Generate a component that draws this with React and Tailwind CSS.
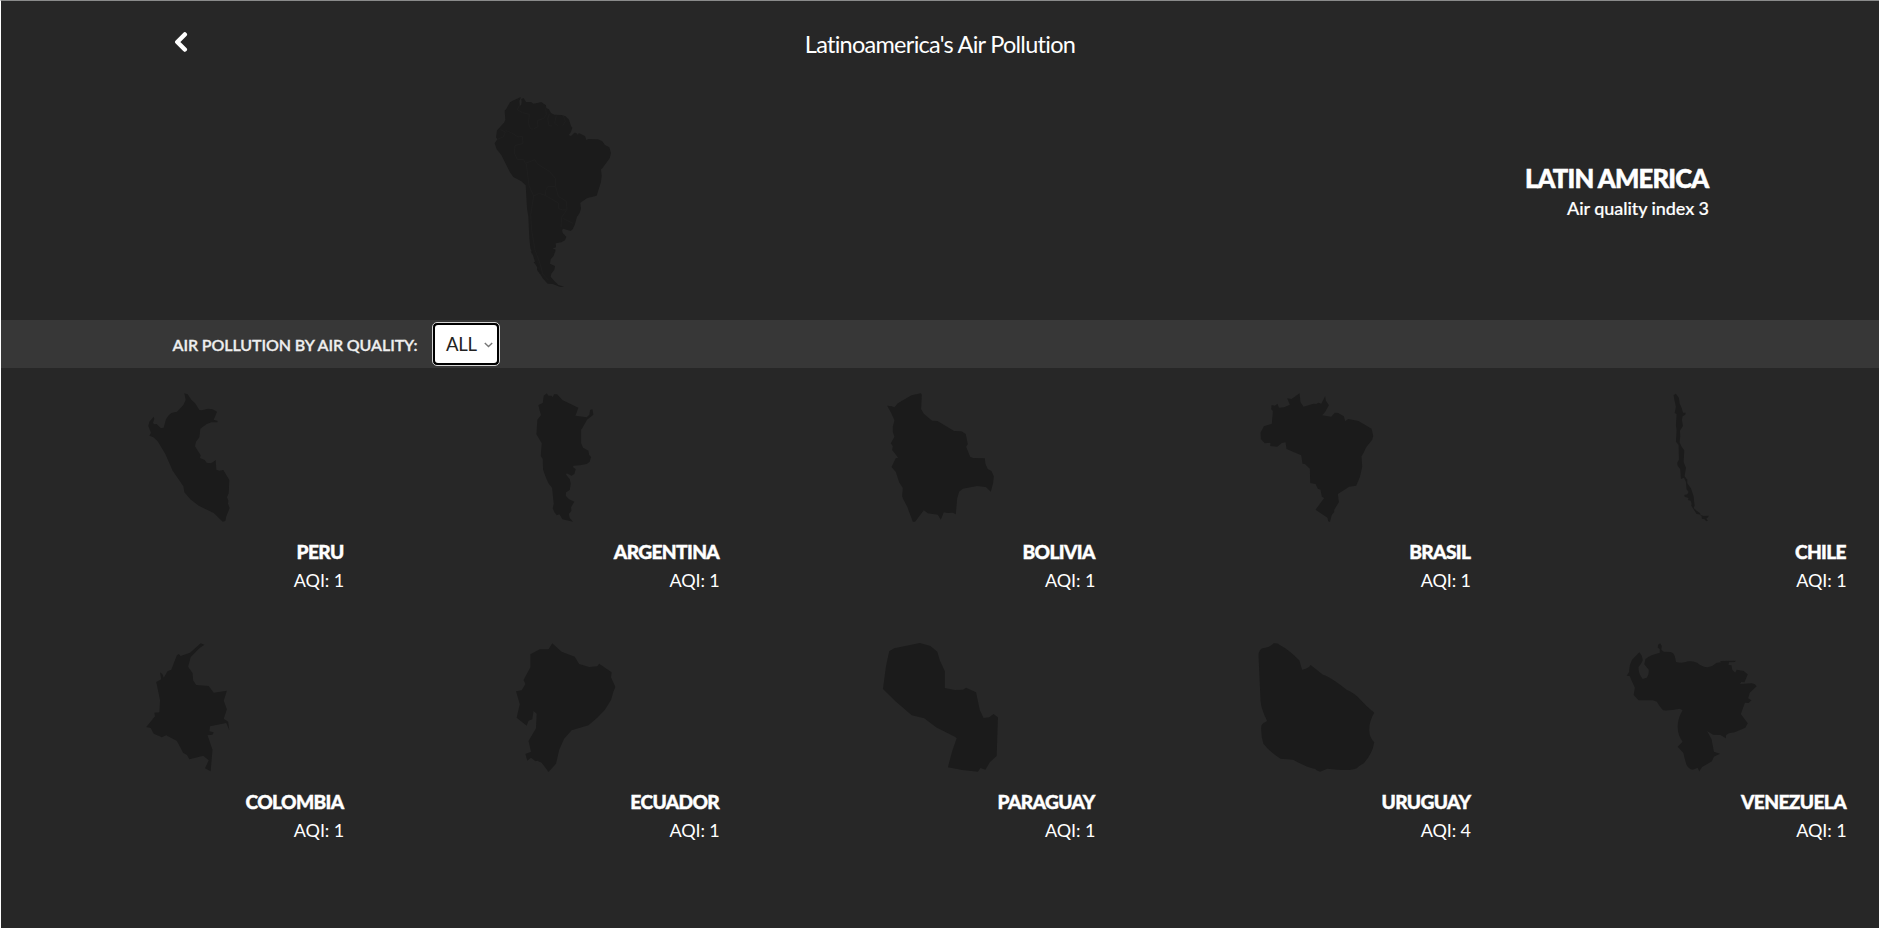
import React from "react";

const countries = [
  { name: "PERU", aqi: 1, place: "translate(129 12) scale(.33333)", d: "M163 40L173 43L184 59L195 69L208 90L216 91L234 86L248 88L261 95L256 108L251 119L263 123L262 127L244 127L229 133L211 146L208 172L198 185L195 199L212 226L210 234L224 240L230 248L242 250L249 246L257 240L259 269L268 272L280 270L298 300L296 340L291 352L295 362L294 371L299 384L289 409L286 423L278 425L251 399L206 377L181 358L163 337L160 319L128 272L106 222L83 184L70 172L58 167L63 158L55 138L58 125L71 110L73 117L69 128L72 133L80 132L93 145L101 143L108 118L116 106L124 99L141 95L160 75L167 60Z" },
  { name: "ARGENTINA", aqi: 1, place: "translate(133.4 12) scale(.33333)", d: "M100 47L109 40L114 47L124 47L127 52L131 43L140 43L157 61L204 83L195 107L229 112L237 104L239 90L246 88L249 104L230 119L216 144L212 149L212 189L218 203L234 212L236 224L242 231L238 245L229 252L209 256L189 257L188 262L196 267L192 282L183 287L169 280L167 284L178 297L181 311L178 330L167 337L166 347L176 358L192 365L182 382L183 393L175 402L178 414L188 425L156 418L147 403L139 406L132 397L127 385L130 372L125 323L115 311L107 294L98 269L97 237L91 228L94 190L78 163L81 119L92 105L87 89L84 75L97 69Z" },
  { name: "BOLIVIA", aqi: 1, place: "translate(117.8 12) scale(.33333)", d: "M52 77L66 79L74 82L84 70L125 46L153 40L156 44L154 87L162 101L187 122L203 123L253 153L275 154L288 162L294 193L289 200L301 230L310 234L345 235L347 252L354 267L365 273L372 289L370 309L363 335L348 321L322 318L279 326L268 335L262 356L258 403L249 398L233 399L222 397L213 419L204 404L174 400L162 391L136 425H129L113 382L100 357L97 349L99 324L88 307L78 276L65 261L78 235L85 233L70 214L67 210L69 199L63 190L74 170L69 155L69 140L74 121L64 99Z" },
  { name: "BRASIL", aqi: 1, place: "translate(112.2 12) scale(.33333)", d: "M178 40L181 67L190 80L220 71L228 72L235 68L243 71L255 49L257 62L266 76L255 95L246 106L273 110L284 98L294 99L311 109L315 124L324 117L355 123L394 146L399 167L396 179L378 202L370 219L364 229L366 261L359 291L348 317L327 320L293 342L296 367L282 389L282 396L275 404L269 426L264 424L262 413L226 389L252 354L245 350L241 329L233 326L226 312L210 309L209 266L194 252L187 251L183 226L139 207L136 187L125 189L111 200L90 198L91 188L74 190L62 177L61 158L71 139L95 131L98 93L93 88L94 75L104 77L112 71L116 83L132 82L149 74L141 55L154 57Z" },
  { name: "CHILE", aqi: 1, place: "translate(116.6 12) scale(.33333)", d: "M162 45L169 41L178 54L180 70L187 86L190 98L198 98L197 104L189 109L187 120L190 138L181 152L182 168L180 187L186 200L194 211L192 246L199 263L195 289L203 299L203 310L214 325L222 349L225 377L222 384L232 393L241 399L243 405L253 408L267 407L266 411L260 416L265 422L260 424L255 418L247 416L246 409L239 403L231 402L215 377L216 371L213 362L205 360L207 354L195 350L194 345L203 343L207 336L201 328L199 306L193 293L184 297L182 268L174 257L173 248L178 239L177 195L169 185L171 151L169 135L171 102L165 99L169 81L164 58Z" },
  { name: "COLOMBIA", aqi: 1, place: "translate(129 12) scale(.625 .33333)", d: "M113 40L119 44L111 55L97 82L93 110L100 129L101 151L106 165L126 168L134 188L155 182L150 212L155 238L150 266L157 275L159 301L154 279L128 289L127 304L134 307L132 314L124 316L132 359L129 424L120 415L126 391L117 377L108 382L95 388L91 375L85 368L75 333L58 316L51 322L38 311L33 294L26 291L40 259L39 248L47 247L48 210L42 156L50 148L48 127L52 133L54 143L60 124L66 119L75 76L78 72L81 78L96 68Z" },
  { name: "ECUADOR", aqi: 1, place: "translate(-246.6 12) scale(.625 .33333)", d: "M675 40L690 65L711 80L718 102L734 111L747 109L750 101L770 127L769 142L776 171L773 184L769 210L759 240L747 263L733 286L706 301L694 326L686 360L681 401L669 426L658 398L651 392L648 394L641 383L635 392L632 372L641 365L637 333L649 295L650 251L645 243L643 268L637 272L634 287L618 263L623 223L617 184L626 181L632 162L629 150L640 112L640 73L655 58L669 58Z" },
  { name: "PARAGUAY", aqi: 1, place: "translate(-622.2 12) scale(.625 .33333)", d: "M1215 64L1223 55L1264 39L1281 48L1292 65L1296 91L1304 123L1304 174L1320 180L1333 179L1338 173L1354 187L1360 240L1366 264L1375 262L1382 252L1389 262L1387 378L1376 397L1369 419L1361 414L1357 425L1332 420L1309 412L1310 404L1316 362L1323 325L1320 320L1290 292L1271 265L1251 256L1225 214L1205 177L1210 108Z" },
  { name: "URUGUAY", aqi: 4, place: "translate(112.2 12) scale(.4075 .33333)", d: "M45 77Q45 57 57 54Q70 55 82 40Q93 38 98 46Q119 59 145 91L152 119Q167 116 173 105L203 134Q219 138 261 179Q282 190 294 208Q309 229 329 248Q315 277 317 303Q317 322 329 337Q325 370 304 399Q292 407 286 415Q271 425 214 416L196 425Q187 422 184 417Q161 411 130 389L99 386Q76 370 57 341Q50 317 52 287Q54 280 66 273Q52 239 50 214Z" },
  { name: "VENEZUELA", aqi: 1, place: "translate(-263.4 12) scale(.4075 .33333)", d: "M1032 40L1036 48L1035 59L1041 65L1058 66Q1066 69 1068 79L1071 96Q1086 101 1101 94Q1114 92 1123 98Q1135 111 1149 112Q1162 108 1171 98L1182 97L1179 93L1218 92L1215 96L1201 97L1200 105L1207 106L1209 119L1216 128L1220 119L1237 123L1247 133L1239 157L1231 156L1228 162L1257 160Q1266 161 1269 169L1252 188L1248 205L1256 211L1249 219L1240 218L1230 252L1247 280L1241 293L1215 307L1201 310L1194 315L1193 325L1180 315L1162 314L1147 303L1158 327L1164 365L1179 371L1164 380L1159 394L1135 411L1128 424L1124 413L1112 419Q1103 418 1097 405Q1092 387 1089 369L1075 350L1087 335Q1075 315 1075 291Q1075 265 1087 241L1080 236Q1059 242 1040 241Q1034 236 1024 215L1014 211L979 211L967 195L970 173L957 138L950 137L956 125Q955 108 963 89L981 67Q990 79 989 92Q984 105 979 111Q978 130 989 147L999 143Q1005 135 1004 119L993 103L996 87Q1009 74 1031 68L1031 57L1026 53L1027 44Z" },
];

function Country({ name, aqi, place, d }) {
  return (
    <article className="flex h-[250px] flex-col">
      <svg className="h-[167px] w-full fill-[#1b1b1b]" aria-hidden="true">
        <path d={d} transform={place} />
      </svg>
      <div className="pr-[32.5px] text-right text-white">
        <h2 className="pr-[0.5px] text-[19.2px] leading-[34px] font-black tracking-[-0.65px] [-webkit-text-stroke:0.4px_white]">{name}</h2>
        <p className="text-[18px] leading-[22px] tracking-[-0.1px]">AQI: {aqi}</p>
      </div>
    </article>
  );
}

function Continent() {
  return (
    <svg className="h-[220px] w-[170px]" viewBox="0 0 510 660" aria-hidden="true">
      <path fill="#1b1b1b" d="M120 67L131 61L146 54L152 51L151 57L148 62L149 74L153 77L155 67L154 57L161 54L168 66L183 66L190 71L202 69L214 66L221 71L228 76L229 84L237 88L243 99L253 104L275 105L287 109L297 119L303 138L307 143L303 156L296 165L303 168L313 158L319 159L324 165L326 159L345 168L349 180L355 177L384 178L397 184L405 195L418 202L423 219L419 235L397 265L393 268L395 287L393 306L385 331L380 347L374 349L352 354L331 368L333 386L329 399L321 410L314 435L308 448L302 453L280 446L276 450L278 459L286 467L289 471L285 481L274 487L257 490L258 502L247 506L256 508L251 528L242 538L240 551L255 558L253 569L244 581L242 590L251 601L265 615L283 620L271 621L248 612L233 611L218 595L209 580L197 552L187 520L181 504L178 474L175 410L171 384L167 316L154 304L130 291L119 275L94 225L80 208L74 190L82 178L78 172L81 151L102 128L106 119L104 92L109 86Z" />
      <g fill="none" stroke="#222222" strokeWidth="1.5">
        <path d="M149 75L142 89L157 98L178 103L175 130L182 147L190 147L204 140L202 122L221 115L229 104L227 86M238 102L233 117L237 137L246 138M259 106L254 130L263 137M280 107L286 124L278 137M81 178L100 171L106 156L91 149M106 151L126 159L144 171L157 169L159 190L135 197L133 219L142 238L161 239L166 250L195 239L200 250L239 275L256 295L257 319L233 320L226 334L227 347L241 355L265 369L266 386L278 390L291 389L289 364L265 349L257 320M169 252L177 317L191 348L208 340L226 346M191 348L182 405L185 451L195 510L211 553L218 582L235 600M290 390L275 412L273 442M278 415L309 430" />
      </g>
      <path fill="#1b1b1b" d="M182 513L188 516L187 525ZM191 547L198 544L204 556L207 572L213 577L209 581L201 570L202 560ZM250 514L257 511L254 520Z" />
    </svg>
  );
}

export default function App() {
  return (
    <div className="h-[928px] overflow-hidden border-t border-l border-t-[#8a8b8b] border-l-white bg-[#272727] font-[Lato,sans-serif] text-white">
      <header className="grid h-[83px] grid-cols-[200px_1fr_200px] items-center">
        <button className="ml-[170px] flex h-6 w-6 items-center" aria-label="Back">
          <svg className="mt-[3px] h-6 w-6" viewBox="0 0 24 24" fill="none">
            <path d="M13.8 2.5L6.3 10L13.8 17.5" stroke="white" strokeWidth="4.5" strokeLinecap="round" strokeLinejoin="round" />
          </svg>
        </button>
        <h1 className="mt-[3px] text-center font-['Gill_Sans','Gill_Sans_MT',Lato,sans-serif] text-[23.5px] leading-7 tracking-[-0.73px]">Latinoamerica's Air Pollution</h1>
      </header>
      <section className="flex h-[236px] items-start justify-between pr-[170px] pl-[469px]">
        <div className="-mt-1"><Continent /></div>
        <div className="mt-[77px] text-right">
          <h2 className="pr-[0.5px] text-[25.6px] leading-[34px] font-black tracking-[-0.8px] [-webkit-text-stroke:0.5px_white]">LATIN AMERICA</h2>
          <p className="text-[18px] leading-[27px] font-medium tracking-[-0.07px] [-webkit-text-stroke:0.2px_white]">Air quality index 3</p>
        </div>
      </section>
      <section className="flex h-[48px] items-center bg-[#373737] pl-[171.5px]">
        <label htmlFor="quality" className="mt-px w-[259.5px] text-[16px] font-semibold tracking-[-0.1px] text-[#eeeeee] [-webkit-text-stroke:0.3px_#eeeeee]">AIR POLLUTION BY AIR QUALITY:</label>
        <div className="flex h-[44px] w-[68px] rounded-[5px] border-[1.5px] border-[#d6d6d6] bg-black p-0.5">
          <button id="quality" className="flex flex-1 items-center justify-between rounded-[3px] bg-white pt-px pr-[4px] pl-[11px] text-[18.5px] tracking-[-0.3px] text-[#222]">
            ALL
            <svg className="h-[6px] w-[9px]" viewBox="0 0 9 6" fill="none">
              <path d="M.8 .9L4.5 4.5L8.2 .9" stroke="#777" strokeWidth="1.4" />
            </svg>
          </button>
        </div>
      </section>
      <main className="grid grid-cols-5">
        {countries.map((country) => <Country key={country.name} {...country} />)}
      </main>
    </div>
  );
}
